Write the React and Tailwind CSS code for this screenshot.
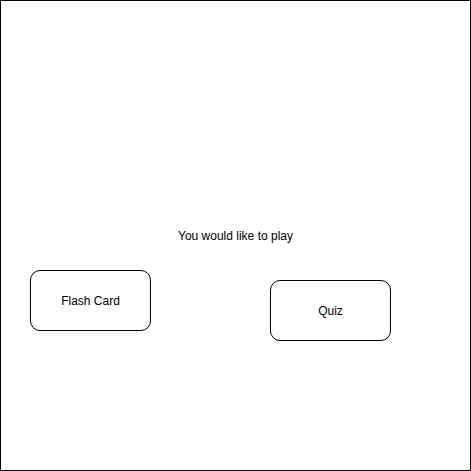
export default function App() {
  return (
    <div
      className="w-[471px] h-[471px] border border-black bg-white text-black text-[12px] leading-[16px]"
      style={{ fontFamily: '"Liberation Sans", Arial, sans-serif' }}
    >
      <div className="pt-[227px]">
        <p className="text-center">You would like to play</p>

        {/* choices */}
        <div className="flex items-start gap-[119px] pl-[29px] mt-[26px]">
          <button className="w-[121px] h-[61px] border border-black rounded-[10px] flex items-center justify-center">
            Flash Card
          </button>
          <button className="w-[121px] h-[61px] mt-[10px] border border-black rounded-[10px] flex items-center justify-center">
            Quiz
          </button>
        </div>
      </div>
    </div>
  );
}
